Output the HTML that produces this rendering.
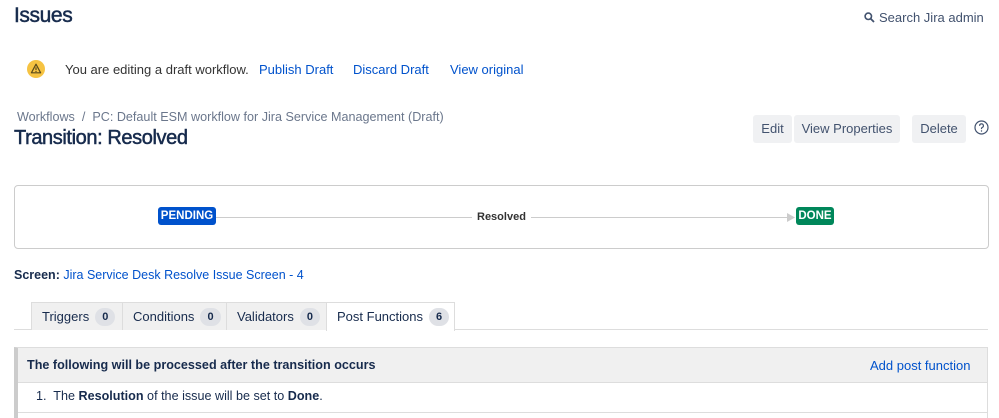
<!DOCTYPE html>
<html><head><meta charset="utf-8"><style>
*{margin:0;padding:0;box-sizing:border-box}
body{width:999px;height:418px;overflow:hidden;background:#fff;font-family:"Liberation Sans",sans-serif;color:#172b4d;position:relative;font-size:13px}
.a{position:absolute;white-space:nowrap}
.link{color:#0052cc}
.btn{position:absolute;top:115px;height:28px;background:#f0f1f3;border-radius:3px;font-size:13px;color:#42526e;line-height:28px;text-align:center}
.tab{position:absolute;top:302px;height:28px;background:#f0f0f0;border:1px solid #ddd;border-bottom:none;font-size:13px;line-height:27px;padding-left:10px;color:#172b4d}
.badge{display:inline-block;background:#dfe1e6;border-radius:9px;font-size:11px;font-weight:bold;height:18px;line-height:18px;padding:0 7px;margin-left:6px;vertical-align:1px}
.h{-webkit-text-stroke:0.5px #172b4d;letter-spacing:-0.4px}
</style></head><body>
<div class="a h" style="left:14px;top:4px;font-size:21px">Issues</div>
<div class="a" style="left:864px;top:10px;font-size:13px;color:#42526e"><svg width="11" height="11" viewBox="0 0 11 11" style="vertical-align:-1px;margin-right:4px"><circle cx="4.3" cy="4.3" r="3.2" fill="none" stroke="#42526e" stroke-width="1.6"/><path d="M6.7 6.7L10 10" stroke="#42526e" stroke-width="1.8"/></svg>Search Jira admin</div>
<svg class="a" style="left:27px;top:60px" width="18" height="18" viewBox="0 0 18 18"><circle cx="9" cy="9" r="9" fill="#f6c342"/><path d="M9 4.2L13.6 12.8H4.4Z" fill="none" stroke="#5a4a1a" stroke-width="1.2" stroke-linejoin="round"/><path d="M9 7.3V10" stroke="#5a4a1a" stroke-width="1.2"/><circle cx="9" cy="11.4" r=".7" fill="#5a4a1a"/></svg>
<div class="a" style="left:65px;top:62px;font-size:13px;color:#333">You are editing a draft workflow.</div>
<div class="a link" style="left:259px;top:62px">Publish Draft</div>
<div class="a link" style="left:353px;top:62px">Discard Draft</div>
<div class="a link" style="left:450px;top:62px">View original</div>
<div class="a" style="left:17px;top:110px;color:#6b778c;font-size:12.6px">Workflows &nbsp;/&nbsp; PC: Default ESM workflow for Jira Service Management (Draft)</div>
<div class="a h" style="left:14px;top:127px;font-size:20px">Transition: Resolved</div>
<div class="btn" style="left:753px;width:39px">Edit</div>
<div class="btn" style="left:794px;width:106px">View Properties</div>
<div class="btn" style="left:912px;width:54px">Delete</div>
<svg class="a" style="left:974px;top:120px" width="15" height="15" viewBox="0 0 15 15"><circle cx="7.5" cy="7.5" r="6.5" fill="none" stroke="#42526e" stroke-width="1.2"/><path d="M5.6 5.8a1.9 1.9 0 1 1 2.6 1.7c-.5.2-.7.6-.7 1.1v.5" fill="none" stroke="#42526e" stroke-width="1.2"/><circle cx="7.5" cy="11" r=".7" fill="#42526e"/></svg>
<div class="a" style="left:14px;top:185px;width:975px;height:64px;border:1px solid #ccc;border-radius:4px"></div>
<div class="a" style="left:216px;top:217px;width:574px;height:1px;background:#ccc"></div>
<svg class="a" style="left:787px;top:213px" width="9" height="9"><path d="M0 0L8 4.5L0 9Z" fill="#ccc"/></svg>
<div class="a" style="left:158px;top:207px;width:58px;height:18px;background:#0052cc;border-radius:3px;color:#fff;font-size:11.5px;font-weight:bold;line-height:18px;text-align:center">PENDING</div>
<div class="a" style="left:472px;top:211px;background:#fff;padding:0 5px;font-size:11px;font-weight:bold;color:#333">Resolved</div>
<div class="a" style="left:796px;top:207px;width:38px;height:18px;background:#00875a;border-radius:3px;color:#fff;font-size:11.5px;font-weight:bold;line-height:18px;text-align:center">DONE</div>
<div class="a" style="left:14px;top:268px;font-size:12.5px"><b>Screen:</b> <span class="link">Jira Service Desk Resolve Issue Screen - 4</span></div>
<div class="a" style="left:14px;top:329px;width:974px;height:1px;background:#ddd"></div>
<div class="tab" style="left:31px;width:92px">Triggers<span class="badge">0</span></div>
<div class="tab" style="left:122px;width:105px">Conditions<span class="badge">0</span></div>
<div class="tab" style="left:226px;width:101px">Validators<span class="badge">0</span></div>
<div class="tab" style="left:326px;width:129px;background:#fff;height:29px">Post Functions<span class="badge">6</span></div>
<div class="a" style="left:14px;top:347px;width:974px;height:71px;border:1px solid #ddd;border-left:4px solid #ccc;border-bottom:none"></div>
<div class="a" style="left:18px;top:348px;width:969px;height:35px;background:#f0f0f0;border-bottom:1px solid #ddd"></div>
<div class="a" style="left:27px;top:358px;font-weight:bold;font-size:12.6px">The following will be processed after the transition occurs</div>
<div class="a link" style="left:870px;top:358px">Add post function</div>
<div class="a" style="left:36px;top:389px;font-size:12.6px">1.&nbsp; The <b>Resolution</b> of the issue will be set to <b>Done</b>.</div>
<div class="a" style="left:18px;top:412px;width:969px;height:1px;background:#ddd"></div>
</body></html>
